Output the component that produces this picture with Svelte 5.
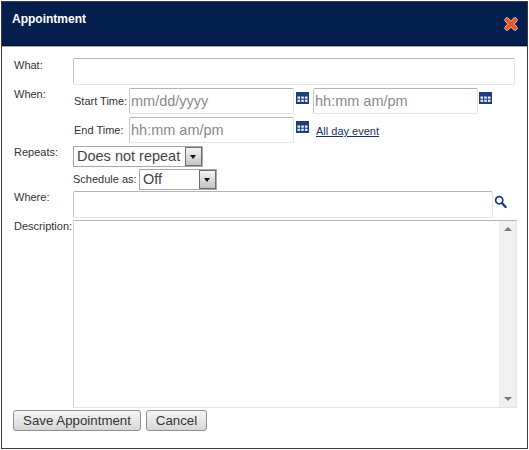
<script>
  const calIcon = [0, 1, 2];
</script>

{#snippet cal()}
  <svg class="cal" width="13" height="12" viewBox="0 0 13 12">
    <rect x="0" y="0" width="13" height="12" fill="#1c3f78" />
    {#each calIcon as c}
      {#each [0, 1] as r}
        <rect x={1.5 + c * 3.7} y={4.5 + r * 3.2} width="2.6" height="2.2" fill="#e8eef8" />
      {/each}
    {/each}
  </svg>
{/snippet}

<div class="dialog">
  <header class="head">
    <h1>Appointment</h1>
    <svg class="close" width="14" height="14" viewBox="0 0 14 14">
      <path d="M3 3 L11 11 M11 3 L3 11" stroke="#d9d2cc" stroke-width="5" stroke-linecap="round" />
      <path d="M3 3 L11 11 M11 3 L3 11" stroke="#f2501c" stroke-width="3.6" stroke-linecap="round" />
    </svg>
  </header>

  <form class="form">
    <div class="row what">
      <span class="lbl">What:</span>
      <input class="field full" type="text" />
    </div>

    <div class="row when">
      <span class="lbl">When:</span>
      <div class="times">
        <div class="time-row">
          <span class="sub">Start Time:</span>
          <input class="field date first" placeholder="mm/dd/yyyy" />
          {@render cal()}
          <input class="field date second" placeholder="hh:mm am/pm" />
          {@render cal()}
        </div>
        <div class="time-row">
          <span class="sub">End Time:</span>
          <input class="field date first" placeholder="hh:mm am/pm" />
          {@render cal()}
          <a class="allday" href="#top">All day event</a>
        </div>
      </div>
    </div>

    <div class="row repeats">
      <span class="lbl">Repeats:</span>
      <div class="fake-select rep">
        <span class="val">Does not repeat</span>
        <span class="arrow"></span>
      </div>
    </div>

    <div class="row sched">
      <span class="lbl"></span>
      <span class="sched-lbl">Schedule as:</span>
      <div class="fake-select off">
        <span class="val">Off</span>
        <span class="arrow"></span>
      </div>
    </div>

    <div class="row where">
      <span class="lbl">Where:</span>
      <input class="field wherein" type="text" />
      <svg class="search" width="13" height="14" viewBox="0 0 13 14">
        <circle cx="5.2" cy="5.2" r="3.6" fill="none" stroke="#1c3f78" stroke-width="1.7" />
        <path d="M8 8.2 L11.6 12" stroke="#1c3f78" stroke-width="2.4" stroke-linecap="round" />
      </svg>
    </div>

    <div class="row desc">
      <span class="lbl">Description:</span>
      <div class="area">
        <div class="scroll">
          <span class="up"></span>
          <span class="down"></span>
        </div>
      </div>
    </div>

    <div class="btns">
      <button type="button">Save Appointment</button>
      <button type="button" class="cancel">Cancel</button>
    </div>
  </form>
</div>

<style>
  :global(body) {
    margin: 0;
    background: #fff;
    font-family: "Liberation Sans", Arial, sans-serif;
  }
  .dialog {
    box-sizing: border-box;
    width: 527px;
    height: 448px;
    margin: 1px 0 0 1px;
    border: 1px solid #3a3a3a;
    background: #fff;
    color: #333;
    overflow: hidden;
  }
  .head {
    box-sizing: border-box;
    height: 44px;
    background: #041f4e;
    border-bottom: 1px solid #000b24;
    box-shadow: 0 1px 0 #a9adb5;
    display: flex;
    justify-content: space-between;
    padding: 10px 9px 0 10px;
  }
  h1 {
    margin: 0;
    color: #fff;
    font-size: 12px;
    line-height: 15px;
    font-weight: bold;
  }
  .close {
    margin-top: 5px;
  }
  .form {
    padding: 12px 0 0 12px;
  }
  .row {
    display: flex;
    align-items: flex-start;
  }
  .lbl {
    flex: 0 0 59px;
    font-size: 11px;
    line-height: 13px;
    white-space: nowrap;
    color: #333;
  }
  .field {
    box-sizing: border-box;
    display: block;
    font-family: "Liberation Sans", Arial, sans-serif;
    font-size: 14.5px;
    padding: 0 0 0 1px;
    margin: 0;
    border: 1px solid #e2e5e9;
    border-top-color: #b4b4b4;
    border-left-color: #c8c8c8;
    border-radius: 2px;
    background: #fff;
    outline: none;
  }
  .field::placeholder {
    color: #8a8a8a;
    opacity: 1;
  }
  .full {
    width: 442px;
    height: 27px;
  }
  .what .lbl {
    padding-top: 1px;
  }
  .when {
    margin-top: 3px;
  }
  .times {
    display: flex;
    flex-direction: column;
    gap: 3px;
  }
  .time-row {
    display: flex;
    align-items: flex-start;
    height: 26px;
  }
  .sub {
    flex: 0 0 55px;
    margin-left: 1px;
    font-size: 11px;
    line-height: 13px;
    padding-top: 7px;
    white-space: nowrap;
  }
  .date {
    width: 165px;
    height: 26px;
  }
  .first {
    margin-right: 1px;
  }
  .second {
    margin-left: 4px;
  }
  .cal {
    margin: 4px 0 0 1px;
    flex: none;
  }
  .allday {
    margin: 8px 0 0 7px;
    font-size: 11px;
    line-height: 13px;
    color: #1c2f5c;
  }
  .repeats {
    margin-top: 3px;
    height: 22px;
  }
  .fake-select {
    box-sizing: border-box;
    display: flex;
    align-items: stretch;
    justify-content: space-between;
    height: 21px;
    border: 1px solid #a8a8a8;
    background: #fff;
    font-size: 14.5px;
    color: #444;
  }
  .val {
    padding-left: 3px;
    line-height: 18px;
    white-space: nowrap;
  }
  .rep {
    width: 130px;
  }
  .off {
    width: 78px;
  }
  .arrow {
    box-sizing: border-box;
    width: 17px;
    flex: none;
    border: 1px solid #6d6d6d;
    background: linear-gradient(#f4f4f4, #c4c4c4);
    position: relative;
  }
  .arrow::after {
    content: "";
    position: absolute;
    left: 4px;
    top: 7px;
    border: 3.5px solid transparent;
    border-top: 4px solid #111;
    border-bottom: 0;
  }
  .sched {
    margin-top: 1px;
    height: 21px;
  }
  .sched-lbl {
    flex: 0 0 66px;
    font-size: 11px;
    line-height: 13px;
    padding-top: 4px;
    white-space: nowrap;
  }
  .where {
    margin-top: 1px;
  }
  .wherein {
    width: 420px;
    height: 27px;
  }
  .search {
    margin: 4px 0 0 1px;
  }
  .desc {
    margin-top: 2px;
  }
  .area {
    box-sizing: border-box;
    width: 444px;
    height: 188px;
    border: 1px solid #e2e5e9;
    border-top-color: #b4b4b4;
    border-left-color: #d0d0d0;
    display: flex;
    justify-content: flex-end;
  }
  .scroll {
    width: 17px;
    background: #f0f0f0;
    position: relative;
  }
  .up,
  .down {
    position: absolute;
    left: 5px;
    border: 4px solid transparent;
  }
  .up {
    top: 6px;
    border-bottom: 4px solid #7a7a7a;
    border-top: 0;
  }
  .down {
    bottom: 6px;
    border-top: 4px solid #7a7a7a;
    border-bottom: 0;
  }
  .btns {
    display: flex;
    gap: 5px;
    margin: 2px 0 0 -1px;
  }
  button {
    box-sizing: border-box;
    height: 21px;
    width: 128px;
    padding: 0;
    font-family: "Liberation Sans", Arial, sans-serif;
    font-size: 13.3px;
    color: #333;
    border: 1px solid #8e8e8e;
    border-radius: 3px;
    background: linear-gradient(#f6f6f6, #d6d6d6);
  }
  .cancel {
    width: 61px;
  }
</style>
